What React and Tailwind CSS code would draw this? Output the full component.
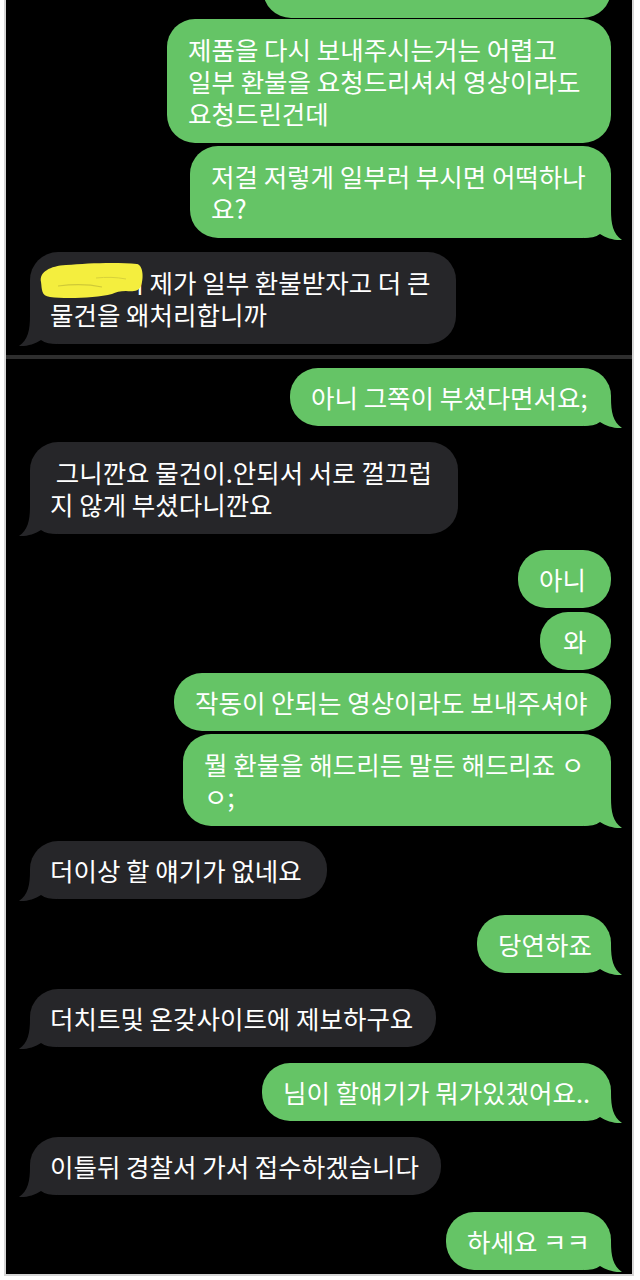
import React from "react";

const FONT = { fontFamily: '"Noto Sans CJK KR", "Noto Sans", sans-serif' };

function Tail({ right, color }) {
  return (
    <svg
      width="40"
      height="32"
      viewBox="0 0 40 32"
      className={`absolute bottom-[-4px] ${right ? "right-[-13px]" : "left-[-13px]"}`}
    >
      <g transform={right ? undefined : "translate(40 0) scale(-1 1)"}>
        <path
          d="M0 0 L27 0 C27 14 29 24 38 30 C30 30.5 22 28 16 24 C12 27 6 28 0 28 Z"
          fill={color}
        />
      </g>
    </svg>
  );
}

function Green({ w, mt, tail, multi, pl = "pl-[21px]", children }) {
  return (
    <div
      className={`relative self-end ${w} ${mt} ${multi ? "py-[14px]" : "py-[13px]"} ${pl} rounded-[28px] bg-[#65c466]`}
    >
      {tail && <Tail right color="#65c466" />}
      <p className="relative z-10 whitespace-pre text-[25.5px] leading-[32px] text-white">
        {children}
      </p>
    </div>
  );
}

function Gray({ w, mt, multi, children, extra }) {
  return (
    <div
      className={`relative self-start ${w} ${mt} ${multi ? "py-[14px]" : "py-[13px]"} pl-[20px] rounded-[28px] bg-[#262629]`}
    >
      <Tail color="#262629" />
      <p className="relative z-10 whitespace-pre text-[25.5px] leading-[32px] text-white">
        {children}
      </p>
      {extra}
    </div>
  );
}

function Scribble() {
  return (
    <svg
      width="112"
      height="44"
      viewBox="0 0 112 44"
      className="absolute left-[6px] top-[6px] z-20"
    >
      <path
        d="M5 24 C3 14 14 8 30 7 C52 5 82 4 101 6 C107 7 108 20 105 28 C103 33 97 34 90 33 C84 33 80 34 76 36 C60 40 30 41 14 39 C5 38 6 31 5 24 Z"
        fill="#f4ee3e"
      />
      <path d="M22 28 C38 26 52 26 66 29" stroke="#cfc937" strokeWidth="1.2" fill="none" />
      <path d="M60 20 C70 19 80 19 90 21" stroke="#d8d23a" strokeWidth="1" fill="none" />
    </svg>
  );
}

export default function App() {
  return (
    <div className="w-[640px] h-[1280px] bg-white" style={FONT}>
      <div className="ml-[4px] w-[630px] h-[1276px] bg-black border-l-2 border-r-2 border-b-2 border-[#d6d6d6] overflow-hidden flex flex-col">
        <div className="flex flex-col pl-[24px] pr-[21px]">
          <div className="self-end w-[348px] h-[58px] mt-[-40px] rounded-[28px] bg-[#65c466]" />
          <Green w="w-[444px]" mt="mt-[1px]" multi>
            {"제품을 다시 보내주시는거는 어렵고\n일부 환불을 요청드리셔서 영상이라도\n요청드린건데"}
          </Green>
          <Green w="w-[421px]" mt="mt-[3px]" multi tail>
            {"저걸 저렇게 일부러 부시면 어떡하나\n요?"}
          </Green>
          <Gray w="w-[426px]" mt="mt-[14px]" multi extra={<Scribble />}>
            {"ㅇㅇㅇ씨 제가 일부 환불받자고 더 큰\n물건을 왜처리합니까"}
          </Gray>
        </div>
        <div className="mt-[11px] h-[4px] bg-[#2e2e2e]" />
        <div className="flex flex-col pl-[24px] pr-[21px]">
          <Green w="w-[321px]" mt="mt-[9px]" tail>
            {"아니 그쪽이 부셨다면서요;"}
          </Green>
          <Gray w="w-[428px]" mt="mt-[16px]" multi>
            {" 그니깐요 물건이.안되서 서로 껄끄럽\n지 않게 부셨다니깐요"}
          </Gray>
          <Green w="w-[93px]" mt="mt-[16px]">
            {"아니"}
          </Green>
          <Green w="w-[71px]" mt="mt-[4px]" pl="pl-[23px]">
            {"와"}
          </Green>
          <Green w="w-[437px]" mt="mt-[3px]">
            {"작동이 안되는 영상이라도 보내주셔야"}
          </Green>
          <Green w="w-[428px]" mt="mt-[3px]" multi tail>
            {"뭘 환불을 해드리든 말든 해드리죠 ㅇ\nㅇ;"}
          </Green>
          <Gray w="w-[297px]" mt="mt-[15px]">
            {"더이상 할 얘기가 없네요"}
          </Gray>
          <Green w="w-[134px]" mt="mt-[16px]" tail>
            {"당연하죠"}
          </Green>
          <Gray w="w-[406px]" mt="mt-[16px]">
            {"더치트및 온갖사이트에 제보하구요"}
          </Gray>
          <Green w="w-[349px]" mt="mt-[16px]" tail>
            {"님이 할얘기가 뭐가있겠어요.."}
          </Green>
          <Gray w="w-[411px]" mt="mt-[16px]">
            {"이틀뒤 경찰서 가서 접수하겠습니다"}
          </Gray>
          <Green w="w-[165px]" mt="mt-[17px]" tail>
            {"하세요 ㅋㅋ"}
          </Green>
        </div>
      </div>
    </div>
  );
}
